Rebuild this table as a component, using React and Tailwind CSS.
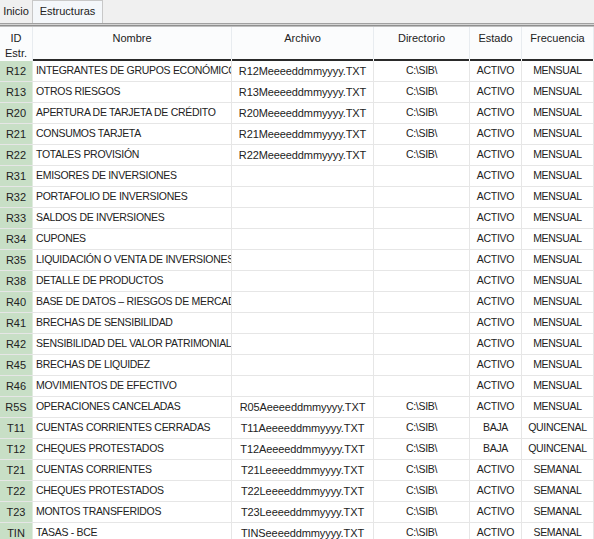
import React from "react";

const rows = [
  ["R12", "INTEGRANTES DE GRUPOS ECONÓMICOS", "R12Meeeeddmmyyyy.TXT", "C:\\SIB\\", "ACTIVO", "MENSUAL"],
  ["R13", "OTROS RIESGOS", "R13Meeeeddmmyyyy.TXT", "C:\\SIB\\", "ACTIVO", "MENSUAL"],
  ["R20", "APERTURA DE TARJETA DE CRÉDITO", "R20Meeeeddmmyyyy.TXT", "C:\\SIB\\", "ACTIVO", "MENSUAL"],
  ["R21", "CONSUMOS TARJETA", "R21Meeeeddmmyyyy.TXT", "C:\\SIB\\", "ACTIVO", "MENSUAL"],
  ["R22", "TOTALES PROVISIÓN", "R22Meeeeddmmyyyy.TXT", "C:\\SIB\\", "ACTIVO", "MENSUAL"],
  ["R31", "EMISORES DE INVERSIONES", "", "", "ACTIVO", "MENSUAL"],
  ["R32", "PORTAFOLIO DE INVERSIONES", "", "", "ACTIVO", "MENSUAL"],
  ["R33", "SALDOS DE INVERSIONES", "", "", "ACTIVO", "MENSUAL"],
  ["R34", "CUPONES", "", "", "ACTIVO", "MENSUAL"],
  ["R35", "LIQUIDACIÓN O VENTA DE INVERSIONES", "", "", "ACTIVO", "MENSUAL"],
  ["R38", "DETALLE DE PRODUCTOS", "", "", "ACTIVO", "MENSUAL"],
  ["R40", "BASE DE DATOS – RIESGOS DE MERCADO", "", "", "ACTIVO", "MENSUAL"],
  ["R41", "BRECHAS DE SENSIBILIDAD", "", "", "ACTIVO", "MENSUAL"],
  ["R42", "SENSIBILIDAD DEL VALOR PATRIMONIAL", "", "", "ACTIVO", "MENSUAL"],
  ["R45", "BRECHAS DE LIQUIDEZ", "", "", "ACTIVO", "MENSUAL"],
  ["R46", "MOVIMIENTOS DE EFECTIVO", "", "", "ACTIVO", "MENSUAL"],
  ["R5S", "OPERACIONES CANCELADAS", "R05Aeeeeddmmyyyy.TXT", "C:\\SIB\\", "ACTIVO", "MENSUAL"],
  ["T11", "CUENTAS CORRIENTES CERRADAS", "T11Aeeeeddmmyyyy.TXT", "C:\\SIB\\", "BAJA", "QUINCENAL"],
  ["T12", "CHEQUES PROTESTADOS", "T12Aeeeeddmmyyyy.TXT", "C:\\SIB\\", "BAJA", "QUINCENAL"],
  ["T21", "CUENTAS CORRIENTES", "T21Leeeeddmmyyyy.TXT", "C:\\SIB\\", "ACTIVO", "SEMANAL"],
  ["T22", "CHEQUES PROTESTADOS", "T22Leeeeddmmyyyy.TXT", "C:\\SIB\\", "ACTIVO", "SEMANAL"],
  ["T23", "MONTOS TRANSFERIDOS", "T23Leeeeddmmyyyy.TXT", "C:\\SIB\\", "ACTIVO", "SEMANAL"],
  ["TIN", "TASAS - BCE", "TINSeeeeddmmyyyy.TXT", "C:\\SIB\\", "ACTIVO", "SEMANAL"],
];

const cell = "h-full flex items-center overflow-hidden whitespace-nowrap border-r border-[#e6e6e6]";
const caps = "text-[10.5px] tracking-[-0.3px]";

const HeaderCell = ({ className, children }) => (
  <div className={`h-full flex flex-col ${className}`}>
    <div className="flex-1 flex items-start justify-center pt-[4px] text-center leading-[15px] border-r border-[#e8ecf0]">
      {children}
    </div>
    <div className="h-[2px] bg-[#2a2a2a] mr-px"></div>
  </div>
);

const App = () => {
  return (
    <div
      className="w-[594px] h-[539px] overflow-hidden bg-white text-[11px] text-[#222]"
      style={{ fontFamily: "'Liberation Sans', Arial, sans-serif" }}
    >
      <div className="h-[23px] bg-[#f0f0f0] flex items-end">
        <div className="h-[23px] w-[32px] flex items-center justify-center">Inicio</div>
        <div className="h-[23px] w-[71px] flex items-center justify-center bg-[#f4f7fa] border border-b-0 border-[#c8c8c8] pb-[2px]">
          Estructuras
        </div>
      </div>
      <div className="h-[4px] flex flex-col">
        <div className="h-px bg-[#a0a0a0]"></div>
        <div className="h-px bg-[#d4d4d4]"></div>
        <div className="h-px bg-[#8f8f8f]"></div>
        <div className="h-px bg-[#c0c0c0]"></div>
      </div>
      <div className="h-[34px] flex bg-[#fbfcfd]">
        <HeaderCell className="w-[33px]">ID<br />Estr.</HeaderCell>
        <HeaderCell className="w-[199px]">Nombre</HeaderCell>
        <HeaderCell className="w-[142px]">Archivo</HeaderCell>
        <HeaderCell className="w-[96px]">Directorio</HeaderCell>
        <HeaderCell className="w-[52px]">Estado</HeaderCell>
        <HeaderCell className="flex-1">Frecuencia</HeaderCell>
      </div>
      {rows.map((r, key) => (
        <div className="h-[21px] flex border-b border-[#e6e6e6]" key={key}>
          <div className="w-[33px] h-full flex items-center justify-center bg-[#c8dfc6] border-r border-[#e0ebdf]">
            {r[0]}
          </div>
          <div className={`${cell} ${caps} w-[199px] pl-[3px]`}>{r[1]}</div>
          <div className={`${cell} w-[142px] justify-center tracking-[-0.1px]`}>{r[2]}</div>
          <div className={`${cell} ${caps} w-[96px] justify-center`}>{r[3]}</div>
          <div className={`${cell} ${caps} w-[52px] justify-center`}>{r[4]}</div>
          <div className={`${cell} ${caps} flex-1 justify-center`}>{r[5]}</div>
        </div>
      ))}
    </div>
  );
};

export default App;
